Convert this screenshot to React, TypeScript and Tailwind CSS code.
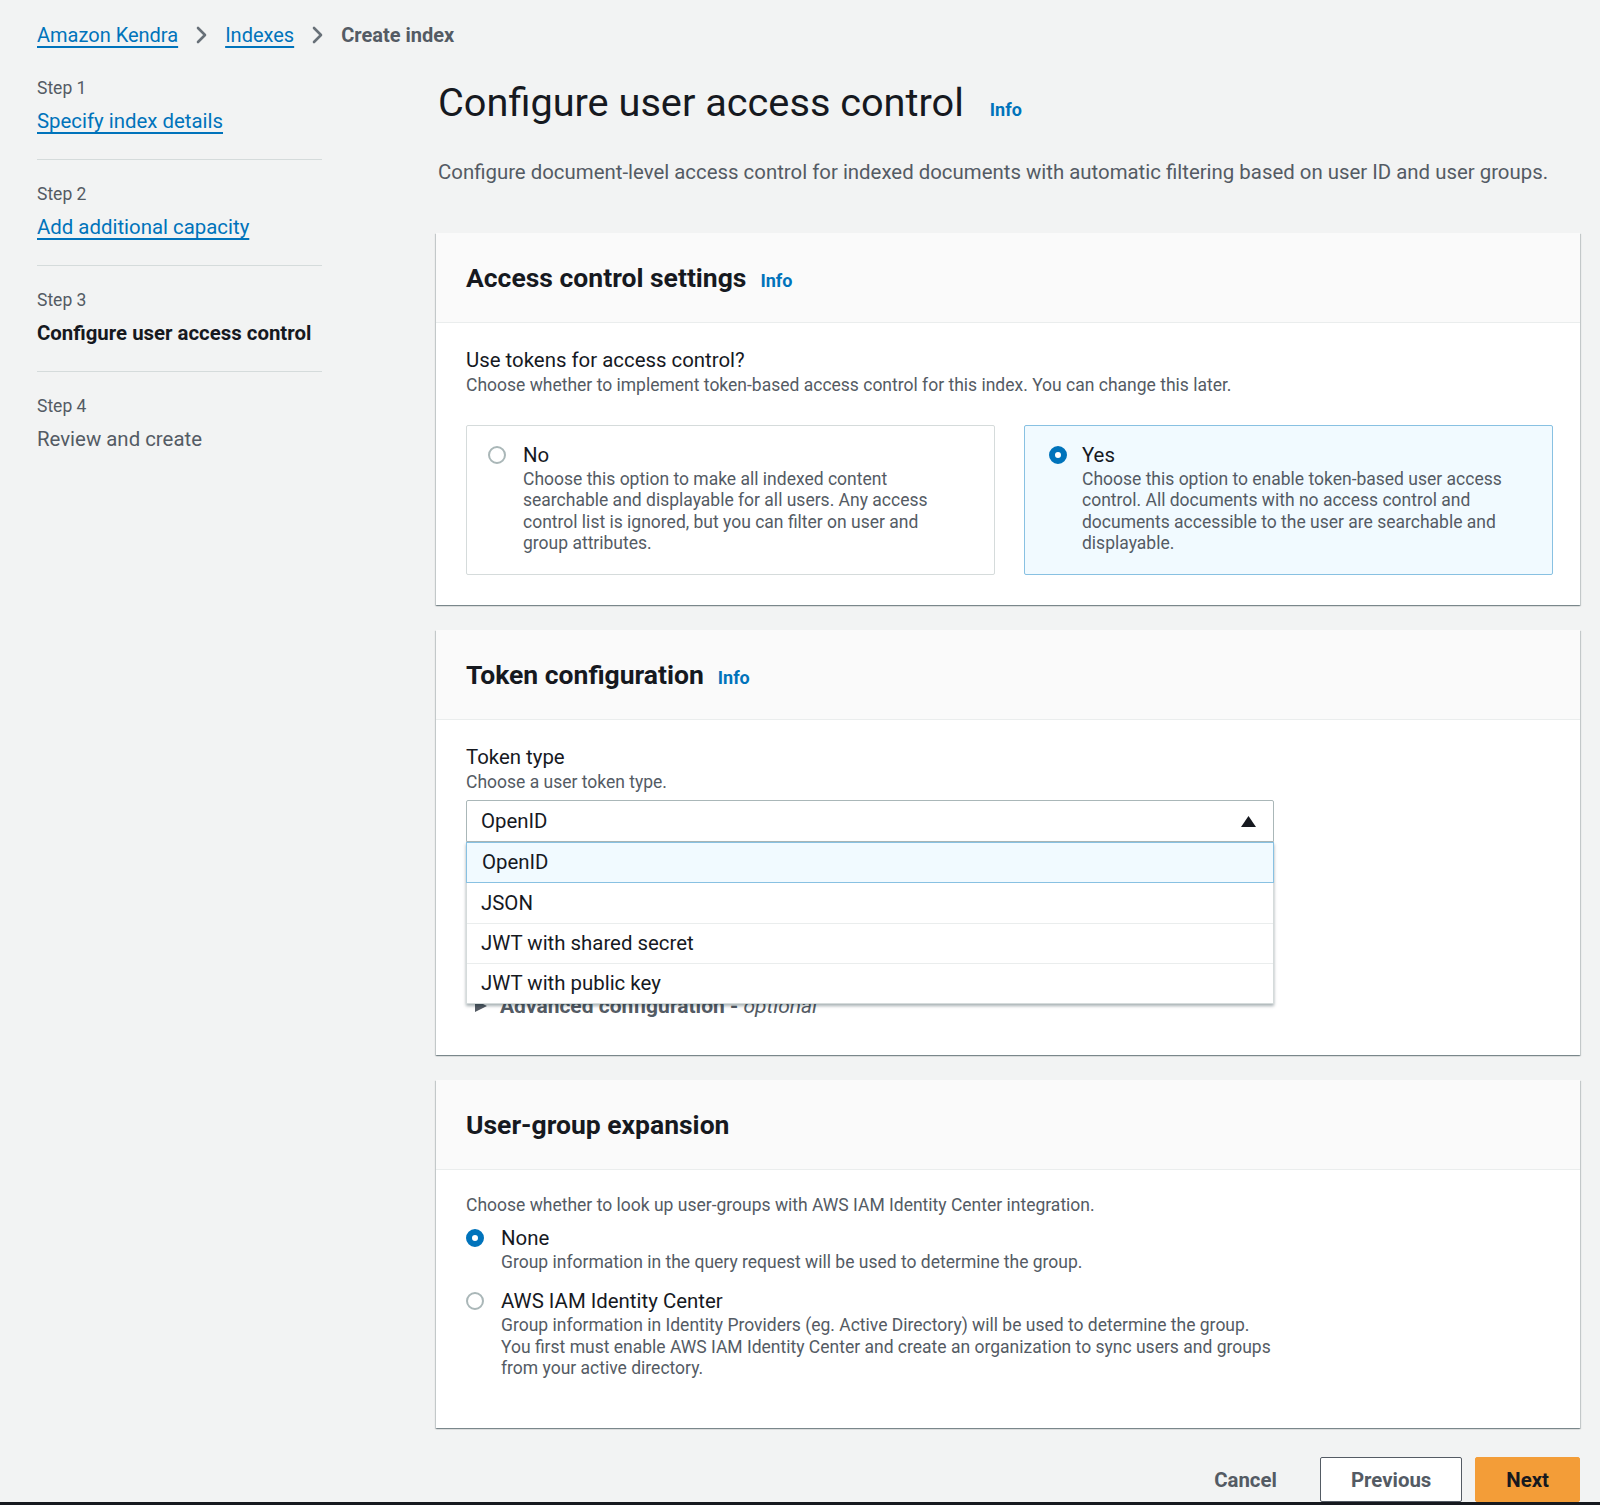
import React from "react";

const Chevron = () => (
  <svg width="11" height="18" viewBox="0 0 11 18" className="mx-[18px] shrink-0">
    <path d="M2 2l7 7-7 7" fill="none" stroke="#687078" strokeWidth="2.6" strokeLinecap="round" strokeLinejoin="round" />
  </svg>
);

const Radio = ({ checked }: { checked?: boolean }) =>
  checked ? (
    <span className="block w-[18px] h-[18px] rounded-full border-[6px] border-[#0073bb] bg-white shrink-0" />
  ) : (
    <span className="block w-[18px] h-[18px] rounded-full border-2 border-[#aab7b8] bg-white shrink-0" />
  );

const Info = ({ className }: { className?: string }) => (
  <span className={"text-[18px] font-bold text-[#0073bb] " + (className || "")}>Info</span>
);

function Card({
  title,
  info,
  bodyClass,
  children,
}: {
  title: string;
  info?: boolean;
  bodyClass: string;
  children: React.ReactNode;
}) {
  return (
    <div className="bg-white shadow-[0_1px_1px_0_rgba(0,28,36,0.3),1px_1px_1px_0_rgba(0,28,36,0.15),-1px_1px_1px_0_rgba(0,28,36,0.15)]">
      <div className="bg-[#fafafa] border-b border-[#eaeded] pl-[30px] pr-[27px] h-[90px] flex items-center">
        <div className="flex items-baseline">
          <h2 className="text-[26.5px] leading-[32px] font-bold text-[#16191f]">{title}</h2>
          {info && <Info className="ml-[14px]" />}
        </div>
      </div>
      <div className={bodyClass}>{children}</div>
    </div>
  );
}

const steps = [
  { label: "Step 1", title: "Specify index details", kind: "link" },
  { label: "Step 2", title: "Add additional capacity", kind: "link" },
  { label: "Step 3", title: "Configure user access control", kind: "current" },
  { label: "Step 4", title: "Review and create", kind: "disabled" },
];

export default function App() {
  return (
    <div className="min-h-[1505px] flex flex-col bg-[#f2f3f3] text-[#16191f] font-['Roboto',sans-serif]">
      <div className="flex-1 pl-[37px] pr-[20px]">
        {/* Breadcrumb */}
        <nav className="pt-[21px] flex items-center text-[20px] leading-[28px]">
          <span className="text-[#0073bb] underline underline-offset-[4px] decoration-[1.5px]">Amazon Kendra</span>
          <Chevron />
          <span className="text-[#0073bb] underline underline-offset-[4px] decoration-[1.5px]">Indexes</span>
          <Chevron />
          <span className="text-[#545b64] font-bold">Create index</span>
        </nav>

        <div className="flex mt-[28px]">
          {/* Side navigation */}
          <aside className="w-[285px] shrink-0">
            {steps.map((s, i) => (
              <div
                key={s.label}
                className={(i > 0 ? "pt-[23px] " : "") + (i < 3 ? "pb-[25px] border-b border-[#d5dbdb]" : "")}
              >
                <div className="text-[17.5px] leading-[22px] text-[#545b64]">{s.label}</div>
                <div className="mt-[9px] text-[20.4px] leading-[26px]">
                  {s.kind === "link" && (
                    <span className="text-[#0073bb] underline underline-offset-[4px] decoration-[1.5px]">{s.title}</span>
                  )}
                  {s.kind === "current" && <span className="font-bold text-[#16191f]">{s.title}</span>}
                  {s.kind === "disabled" && <span className="text-[#545b64]">{s.title}</span>}
                </div>
              </div>
            ))}
          </aside>

          {/* Main */}
          <main className="ml-[114px] flex-1 pt-[2px]">
            <div className="flex items-baseline pl-[2px]">
              <h1 className="text-[39.7px] leading-[48px] font-normal text-[#16191f]">Configure user access control</h1>
              <Info className="ml-[26px]" />
            </div>
            <p className="mt-[31px] pl-[2px] text-[20.4px] leading-[28px] text-[#545b64]">
              Configure document-level access control for indexed documents with automatic filtering based on user ID and user groups.
            </p>

            <div className="mt-[47px] flex flex-col gap-[25px]">
              {/* Card 1 */}
              <Card title="Access control settings" info bodyClass="pl-[30px] pr-[27px] pt-[24px] pb-[30px]">
                <div className="text-[20.4px] leading-[26px]">Use tokens for access control?</div>
                <div className="mt-[1px] text-[17.5px] leading-[22px] text-[#545b64]">
                  Choose whether to implement token-based access control for this index. You can change this later.
                </div>
                <div className="mt-[29px] grid grid-cols-2 gap-[29px]">
                  <div className="border border-[#d5dbdb] rounded-[2px] bg-white pl-[21px] pr-[12px] pt-[16px] pb-[20px] flex">
                    <div className="mt-[4px]">
                      <Radio />
                    </div>
                    <div className="ml-[17px]">
                      <div className="text-[20.4px] leading-[26px]">No</div>
                      <div className="mt-[1px] text-[17.5px] leading-[21.3px] text-[#545b64] whitespace-nowrap">
                        Choose this option to make all indexed content
                        <br />
                        searchable and displayable for all users. Any access
                        <br />
                        control list is ignored, but you can filter on user and
                        <br />
                        group attributes.
                      </div>
                    </div>
                  </div>
                  <div className="border border-[#88c1e2] rounded-[2px] bg-[#f1faff] pl-[24px] pr-[12px] pt-[16px] pb-[20px] flex">
                    <div className="mt-[4px]">
                      <Radio checked />
                    </div>
                    <div className="ml-[15px]">
                      <div className="text-[20.4px] leading-[26px]">Yes</div>
                      <div className="mt-[1px] text-[17.5px] leading-[21.3px] text-[#545b64] whitespace-nowrap">
                        Choose this option to enable token-based user access
                        <br />
                        control. All documents with no access control and
                        <br />
                        documents accessible to the user are searchable and
                        <br />
                        displayable.
                      </div>
                    </div>
                  </div>
                </div>
              </Card>

              {/* Card 2 */}
              <Card title="Token configuration" info bodyClass="pl-[30px] pr-[27px] pt-[24px] pb-[36px]">
                <div className="text-[20.4px] leading-[26px]">Token type</div>
                <div className="mt-[1px] text-[17.5px] leading-[22px] text-[#545b64]">Choose a user token type.</div>
                <div className="relative mt-[7px] w-[808px]">
                  <div className="h-[42px] border border-[#aab7b8] rounded-t-[2px] bg-white flex items-center justify-between pl-[14px] pr-[17px]">
                    <span className="text-[20.4px] leading-[26px]">OpenID</span>
                    <svg width="15" height="11" viewBox="0 0 15 11">
                      <polygon points="7.5,0 15,11 0,11" fill="#16191f" />
                    </svg>
                  </div>
                  <div className="absolute left-0 top-full w-full z-10 bg-white border-x border-b border-[#d5dbdb] shadow-[0_2px_3px_0_rgba(0,28,36,0.35)]">
                    <div className="h-[41px] -mx-px border border-[#88c1e2] bg-[#f1faff] flex items-center pl-[15px] text-[20.4px]">
                      OpenID
                    </div>
                    <div className="h-[40px] flex items-center pl-[14px] text-[20.4px]">JSON</div>
                    <div className="h-[40px] border-t border-[#eaeded] flex items-center pl-[14px] text-[20.4px]">
                      JWT with shared secret
                    </div>
                    <div className="h-[40px] border-t border-[#eaeded] flex items-center pl-[14px] text-[20.4px]">
                      JWT with public key
                    </div>
                  </div>
                </div>
                <div className="mt-[151px] flex items-center">
                  <svg width="12" height="12" viewBox="0 0 12 12" className="ml-[9px]">
                    <polygon points="0,0 12,6 0,12" fill="#545b64" />
                  </svg>
                  <span className="ml-[13px] text-[21px] leading-[26px] font-bold text-[#545b64]">
                    Advanced configuration - <span className="font-normal italic">optional</span>
                  </span>
                </div>
              </Card>

              {/* Card 3 */}
              <Card title="User-group expansion" bodyClass="pl-[30px] pr-[27px] pt-[24px] pb-[49px]">
                <div className="text-[17.5px] leading-[22px] text-[#545b64]">
                  Choose whether to look up user-groups with AWS IAM Identity Center integration.
                </div>
                <div className="mt-[9px] flex">
                  <div className="mt-[4px]">
                    <Radio checked />
                  </div>
                  <div className="ml-[17px]">
                    <div className="text-[20.4px] leading-[26px]">None</div>
                    <div className="mt-[1px] text-[17.5px] leading-[21.3px] text-[#545b64]">
                      Group information in the query request will be used to determine the group.
                    </div>
                  </div>
                </div>
                <div className="mt-[15px] flex">
                  <div className="mt-[4px]">
                    <Radio />
                  </div>
                  <div className="ml-[17px]">
                    <div className="text-[20.4px] leading-[26px]">AWS IAM Identity Center</div>
                    <div className="mt-[1px] text-[17.5px] leading-[21.3px] text-[#545b64] whitespace-nowrap">
                      Group information in Identity Providers (eg. Active Directory) will be used to determine the group.
                      <br />
                      You first must enable AWS IAM Identity Center and create an organization to sync users and groups
                      <br />
                      from your active directory.
                    </div>
                  </div>
                </div>
              </Card>
            </div>

            {/* Actions */}
            <div className="mt-[29px] flex justify-end items-center gap-[13px]">
              <button className="h-[45px] px-[30px] text-[20.4px] font-bold text-[#545b64]">Cancel</button>
              <button className="h-[45px] px-[30px] text-[20.4px] font-bold text-[#545b64] bg-white border border-[#545b64] rounded-[2px]">
                Previous
              </button>
              <button className="h-[45px] px-[30px] text-[20.4px] font-bold text-[#16191f] bg-[#f39d38] border border-[#f39d38] rounded-[2px]">
                Next
              </button>
            </div>
          </main>
        </div>
      </div>
      <div className="h-[3px] bg-[#16191f]" />
    </div>
  );
}
